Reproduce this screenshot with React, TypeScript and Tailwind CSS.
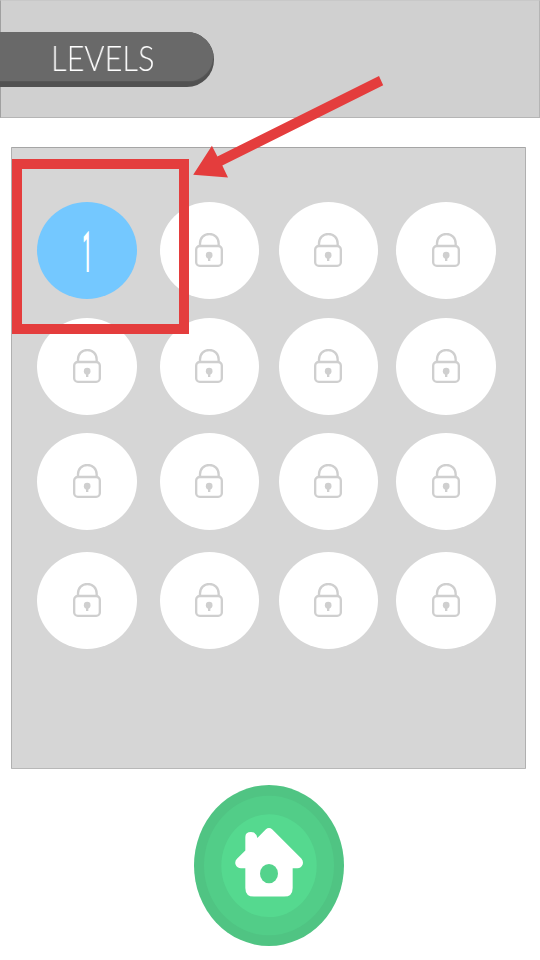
function Lock() {
  return (
    <svg className="h-[34px] w-[28px]" viewBox="135 129 84 102" fill="none" stroke="#cfcfcf" strokeWidth="7">
      <path d="M150 166V160C150 143 162 132 178 132S206 143 206 160V166" />
      <rect x="138.500" y="168" width="77" height="59.500" rx="11" />
      <circle cx="177.500" cy="195.500" r="10" fill="#cfcfcf" stroke="none" />
      <path d="M177.500 200V213" />
    </svg>
  );
}

function Level({ index }: { index: number }) {
  if (index === 0) {
    return (
      <button className="flex h-[97px] w-[100px] items-center justify-center rounded-[50%] bg-[#74c8ff]">
        <span className="mt-[3px] ml-px block scale-x-[0.3] font-['Roboto',sans-serif] text-[57px] leading-none font-medium text-white">
          1
        </span>
      </button>
    );
  }
  const outer = index % 4 === 0 || index % 4 === 3;
  return (
    <button
      className={`flex h-[97px] items-center justify-center rounded-[50%] bg-white pb-px ${
        outer ? "w-[100px] pr-px" : "w-[99px] pr-px"
      }`}
    >
      <Lock />
    </button>
  );
}

function HomeButton() {
  return (
    <button className="mx-auto mt-4 block h-[161px] w-[150px]" aria-label="Home">
      <svg className="block h-full w-full" viewBox="42 45 450 482" preserveAspectRatio="none">
        <ellipse cx="267" cy="286" rx="225" ry="241" fill="#50c483" />
        <ellipse cx="267" cy="286" rx="195" ry="209" fill="#52cd88" />
        <ellipse cx="267" cy="286.500" rx="143" ry="154" fill="#55d98f" />
        <path
          fill="#fff"
          d="M257 178Q267 170 277 178L364 265Q371 273 368 283Q364 294 352 294H338V353Q338 379 312 379H222Q196 379 196 353V294H183Q171 294 167 284Q163 274 171 266L196 241V201Q196 186 213 186Q229 186 232 204Z"
        />
        <ellipse cx="267" cy="310.500" rx="27" ry="29" fill="#54d38c" />
      </svg>
    </button>
  );
}

export default function App() {
  return (
    <div className="relative h-[960px] w-[540px] overflow-hidden bg-white">
      <header className="h-[118px] border border-t-[#c8c8c8] border-r-[#b5b5b5] border-b-[#b5b5b5] border-l-[#a0a0a0] bg-[#d0d0d0] pt-[31px]">
        <div className="-ml-px h-[55px] w-[214px] overflow-hidden rounded-r-[27px] bg-[#515151]">
          <div className="flex h-[49px] w-[213px] items-center rounded-r-[26px] bg-[#696969] pl-[51px] shadow-[0_0_2px_#696969]">
            <h1 className="origin-left scale-x-[0.855] pt-px font-['Lato',sans-serif] text-[36px] leading-none font-light whitespace-nowrap text-white will-change-transform">
              LEVELS
            </h1>
          </div>
        </div>
      </header>

      <main className="mt-[29px] ml-[11px] h-[622px] w-[515px] rounded-[1px] border border-t-[#a5a5a5] border-r-[#b0b0b0] border-b-[#b8b8b8] border-l-[#b0b0b0] bg-[#d6d6d6] pt-[54px] pl-[25px]">
        <div className="grid grid-cols-[123px_119px_117px_100px] grid-rows-[116px_115px_119px_97px]">
          {Array.from({ length: 16 }, (_, i) => (
            <Level key={i} index={i} />
          ))}
        </div>
      </main>

      <div className="-ml-0.5">
        <HomeButton />
      </div>

      <div className="pointer-events-none absolute top-[159px] left-[12px] h-[175px] w-[177px] border-[10px] border-[#e43d3d]" />
      <svg className="pointer-events-none absolute top-[70px] left-[190px]" width="200" height="115" viewBox="190 70 200 115">
        <path fill="#e43d3d" d="M193.200 174.700L211.900 145.700L217.400 156.500L379 76L383.200 85.200L222.300 165.500L228 177.500Z" />
      </svg>
    </div>
  );
}
